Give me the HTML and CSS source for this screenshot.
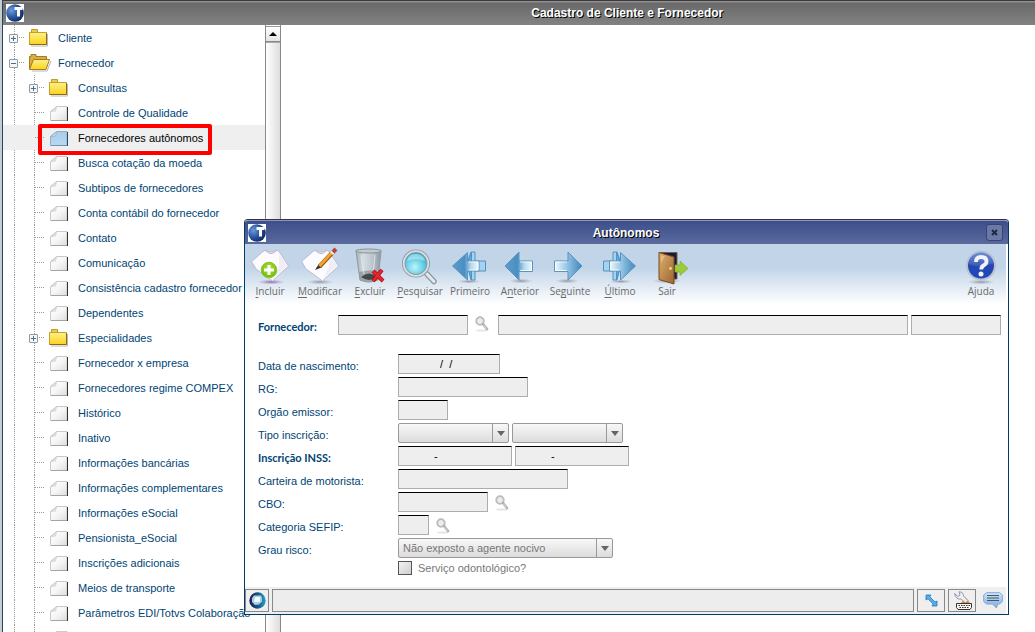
FILE: index.html
```html
<!DOCTYPE html>
<html lang="pt-BR">
<head>
<meta charset="utf-8">
<title>Cadastro de Cliente e Fornecedor</title>
<link rel="stylesheet" href="styles.css">
</head>
<body>
<svg class="defs" aria-hidden="true">
  <defs>
    <linearGradient id="gYellow" x1="0" y1="0" x2="0" y2="1"><stop offset="0" stop-color="#fff18c"/><stop offset="1" stop-color="#fbd21c"/></linearGradient>
    <linearGradient id="gPaper" x1="0" y1="0" x2="1" y2="1"><stop offset="0" stop-color="#fff"/><stop offset=".5" stop-color="#f6f6f6"/><stop offset="1" stop-color="#dcdcdc"/></linearGradient>
    <linearGradient id="gPaperBlue" x1="0" y1="0" x2="0" y2="1"><stop offset="0" stop-color="#a9cdea"/><stop offset="1" stop-color="#b9d8f0"/></linearGradient>
    <radialGradient id="gGlobe" cx=".3" cy=".35" r=".75"><stop offset="0" stop-color="#6f9ad8"/><stop offset=".5" stop-color="#2c59a5"/><stop offset="1" stop-color="#10285e"/></radialGradient>
    <linearGradient id="gArrowL" x1="0" y1="0" x2="1" y2="0"><stop offset="0" stop-color="#5b9ccb"/><stop offset=".45" stop-color="#4a8fc2"/><stop offset=".7" stop-color="#b5d8ee"/><stop offset="1" stop-color="#f2f9fe"/></linearGradient>
    <linearGradient id="gArrowR" x1="1" y1="0" x2="0" y2="0"><stop offset="0" stop-color="#3f86bd"/><stop offset=".5" stop-color="#8dbfe1"/><stop offset="1" stop-color="#f2f9fe"/></linearGradient>
    <radialGradient id="gShadow"><stop offset="0" stop-color="#667" stop-opacity=".65"/><stop offset="1" stop-color="#99a" stop-opacity="0"/></radialGradient>
    <radialGradient id="gShadowPink"><stop offset="0" stop-color="#7a5690" stop-opacity=".85"/><stop offset="1" stop-color="#a98bb8" stop-opacity="0"/></radialGradient>
    <radialGradient id="gGreen" cx=".5" cy=".4"><stop offset="0" stop-color="#b6e83f"/><stop offset="1" stop-color="#78bd16"/></radialGradient>
    <linearGradient id="gBin" x1="0" y1="0" x2="1" y2="0"><stop offset="0" stop-color="#a3adb4"/><stop offset=".3" stop-color="#d5dde3"/><stop offset=".65" stop-color="#bcc6ce"/><stop offset="1" stop-color="#8c969d"/></linearGradient>
    <radialGradient id="gLens" cx=".45" cy=".65" r=".6"><stop offset="0" stop-color="#bdf4fb"/><stop offset=".6" stop-color="#63cfe6"/><stop offset="1" stop-color="#35a5cc"/></radialGradient>
    <linearGradient id="gDoor" x1="0" y1="0" x2="1" y2="1"><stop offset="0" stop-color="#dfb070"/><stop offset="1" stop-color="#9c6431"/></linearGradient>
    <linearGradient id="gHelp" x1="0" y1="0" x2="0" y2="1"><stop offset="0" stop-color="#5a86d8"/><stop offset=".5" stop-color="#2447b0"/><stop offset="1" stop-color="#1e49c0"/></linearGradient>
    <linearGradient id="gOrb" x1="0" y1="0" x2="1" y2="0"><stop offset="0" stop-color="#1c1f52"/><stop offset=".55" stop-color="#195a86"/><stop offset="1" stop-color="#25a4c6"/></linearGradient>
    <linearGradient id="gChat" x1="0" y1="0" x2="0" y2="1"><stop offset="0" stop-color="#d4e6f7"/><stop offset="1" stop-color="#79a9de"/></linearGradient>
  </defs>
  <symbol id="logo" viewBox="0 0 18 18">
    <rect width="18" height="18" fill="#fff"/>
    <circle cx="9" cy="9" r="8.800" fill="url(#gGlobe)"/>
    <path d="M8.500 4.500H16.500M12.500 4.500V12.500" stroke="#fff" stroke-width="3" fill="none"/>
  </symbol>
  <symbol id="folder" viewBox="0 0 20 18">
    <path d="M2 17H18.500V5" stroke="#b9b9b9" fill="none"/>
    <path d="M2.500 4V.5H8.500V4" fill="#eccb4c" stroke="#c09a2c"/>
    <path d="M.5 3.500H17.500V15.500H.5Z" fill="url(#gYellow)" stroke="#c8a020"/>
    <path d="M.5 15.500H17.500V4" fill="none" stroke="#8d6a10"/>
  </symbol>
  <symbol id="folder-open" viewBox="0 0 23 18">
    <path d="M3 17H18L22 7" stroke="#b5b5b5" fill="none"/>
    <path d="M.5 15V2.500H2V.5H7V2.500H17.500V7" fill="#d8ad46" stroke="#a57c20"/>
    <path d="M4.500 5.500H20.500L17 15.500H.5Z" fill="url(#gYellow)" stroke="#a57c20"/>
  </symbol>
  <symbol id="doc" viewBox="0 0 20 16">
    <path d="M6.500 .5H17V14.500H.5V5.500Z" fill="url(#gPaper)" stroke="#c9c9c9"/>
    <path d="M6.500 1L5.500 5L1 5.500Z" fill="#e6e6e6" stroke="#c4c4c4" stroke-width=".6"/>
    <path d="M17.500 1V15" stroke="#333"/><path d="M1 14.500H17" stroke="#a4a4a4"/>
  </symbol>
  <symbol id="doc-on" viewBox="0 0 20 16">
    <path d="M6.500 .5H17V14.500H.5V5.500Z" fill="url(#gPaperBlue)" stroke="#8eb0cc"/>
    <path d="M6.500 1L5.500 5L1 5.500Z" fill="#d3e6f5" stroke="#7fa6c6" stroke-width=".6"/>
    <path d="M17.500 1V15" stroke="#2c4a66"/><path d="M1 14.500H17" stroke="#6f93b2"/>
  </symbol>
  <symbol id="shirt" viewBox="0 0 38 36">
    <path d="M12 2.500L15 1Q20 5 25 1L28 2.500L37.500 17L31 23L21.500 32L12 25L5 20L.7 12.500Z" fill="#fcfbff" stroke="#b6b0c6" stroke-width=".8"/>
    <path d="M14.500 1.500Q20 7.500 25.500 1.500" fill="none" stroke="#b3acc0"/>
    <path d="M28 5L36 16.500L23 29L28 17Z" fill="#f0edf5"/>
  </symbol>
  <symbol id="arrow-l" viewBox="0 0 36 36">
    <ellipse cx="19" cy="32" rx="12" ry="2.500" fill="url(#gShadow)"/>
    <path d="M3 17L17 3V12H30.500V22.500H17V31Z" fill="url(#gArrowL)" stroke="#5b93bd"/>
    <path d="M18 13H29.500V21.500H18" fill="none" stroke="#fff" opacity=".8"/>
  </symbol>
  <symbol id="arrow-r" viewBox="0 0 36 36">
    <ellipse cx="15" cy="32" rx="12" ry="2.500" fill="url(#gShadow)"/>
    <path d="M30 17L16 3V12H2.500V22.500H16V31Z" fill="url(#gArrowR)" stroke="#5b93bd"/>
    <path d="M15 13H3.500V21.500H15" fill="none" stroke="#fff" opacity=".8"/>
  </symbol>
  <symbol id="lookup" viewBox="0 0 14 16">
    <ellipse cx="7" cy="14.500" rx="6" ry="1" fill="#e4e4e4"/>
    <circle cx="5" cy="5" r="3.800" fill="#ececec" stroke="#bcbcbc" stroke-width="1.800"/>
    <path d="M8 8L12 13" stroke="#b2b2b2" stroke-width="2.600" stroke-linecap="round"/>
    <path d="M8.500 9L11.500 12.500" stroke="#ddd"/>
  </symbol>
</svg>

<main class="app">
  <header class="app-bar">
    <svg class="logo"><use href="#logo"/></svg>
    <h1 class="app-title">Cadastro de Cliente e Fornecedor</h1>
  </header>
  <div class="app-body">
    <nav class="tree" aria-label="Menu">
      <ul class="tree-list">
        <li class="row"><button class="cell toggle" aria-label="Expandir"></button><svg class="ico folder"><use href="#folder"/></svg><a href="#">Cliente</a></li>
        <li class="row"><button class="cell toggle open" aria-label="Recolher"></button><svg class="ico folder-open"><use href="#folder-open"/></svg><a href="#">Fornecedor</a></li>
        <li class="row"><span class="cell"></span><button class="cell toggle" aria-label="Expandir"></button><svg class="ico folder"><use href="#folder"/></svg><a href="#">Consultas</a></li>
        <li class="row"><span class="cell"></span><span class="cell branch"></span><svg class="ico doc"><use href="#doc"/></svg><a href="#">Controle de Qualidade</a></li>
        <li class="row selected"><span class="cell"></span><span class="cell branch"></span><svg class="ico doc"><use href="#doc-on"/></svg><a href="#">Fornecedores autônomos</a></li>
        <li class="row"><span class="cell"></span><span class="cell branch"></span><svg class="ico doc"><use href="#doc"/></svg><a href="#">Busca cotação da moeda</a></li>
        <li class="row"><span class="cell"></span><span class="cell branch"></span><svg class="ico doc"><use href="#doc"/></svg><a href="#">Subtipos de fornecedores</a></li>
        <li class="row"><span class="cell"></span><span class="cell branch"></span><svg class="ico doc"><use href="#doc"/></svg><a href="#">Conta contábil do fornecedor</a></li>
        <li class="row"><span class="cell"></span><span class="cell branch"></span><svg class="ico doc"><use href="#doc"/></svg><a href="#">Contato</a></li>
        <li class="row"><span class="cell"></span><span class="cell branch"></span><svg class="ico doc"><use href="#doc"/></svg><a href="#">Comunicação</a></li>
        <li class="row"><span class="cell"></span><span class="cell branch"></span><svg class="ico doc"><use href="#doc"/></svg><a href="#">Consistência cadastro fornecedor</a></li>
        <li class="row"><span class="cell"></span><span class="cell branch"></span><svg class="ico doc"><use href="#doc"/></svg><a href="#">Dependentes</a></li>
        <li class="row"><span class="cell"></span><button class="cell toggle" aria-label="Expandir"></button><svg class="ico folder"><use href="#folder"/></svg><a href="#">Especialidades</a></li>
        <li class="row"><span class="cell"></span><span class="cell branch"></span><svg class="ico doc"><use href="#doc"/></svg><a href="#">Fornecedor x empresa</a></li>
        <li class="row"><span class="cell"></span><span class="cell branch"></span><svg class="ico doc"><use href="#doc"/></svg><a href="#">Fornecedores regime COMPEX</a></li>
        <li class="row"><span class="cell"></span><span class="cell branch"></span><svg class="ico doc"><use href="#doc"/></svg><a href="#">Histórico</a></li>
        <li class="row"><span class="cell"></span><span class="cell branch"></span><svg class="ico doc"><use href="#doc"/></svg><a href="#">Inativo</a></li>
        <li class="row"><span class="cell"></span><span class="cell branch"></span><svg class="ico doc"><use href="#doc"/></svg><a href="#">Informações bancárias</a></li>
        <li class="row"><span class="cell"></span><span class="cell branch"></span><svg class="ico doc"><use href="#doc"/></svg><a href="#">Informações complementares</a></li>
        <li class="row"><span class="cell"></span><span class="cell branch"></span><svg class="ico doc"><use href="#doc"/></svg><a href="#">Informações eSocial</a></li>
        <li class="row"><span class="cell"></span><span class="cell branch"></span><svg class="ico doc"><use href="#doc"/></svg><a href="#">Pensionista_eSocial</a></li>
        <li class="row"><span class="cell"></span><span class="cell branch"></span><svg class="ico doc"><use href="#doc"/></svg><a href="#">Inscrições adicionais</a></li>
        <li class="row"><span class="cell"></span><span class="cell branch"></span><svg class="ico doc"><use href="#doc"/></svg><a href="#">Meios de transporte</a></li>
        <li class="row"><span class="cell"></span><span class="cell branch"></span><svg class="ico doc"><use href="#doc"/></svg><a href="#">Parâmetros EDI/Totvs Colaboração</a></li>
        <li class="row"><span class="cell"></span><span class="cell branch"></span><svg class="ico doc"><use href="#doc"/></svg></li>
      </ul>
    </nav>
    <div class="scroll"><button class="scroll-up" aria-label="Rolar para cima"><svg width="8" height="4" viewBox="0 0 8 4"><path d="M0 4L4 0L8 4Z"/></svg></button><div class="scroll-thumb"></div></div>
  </div>
</main>

<section class="window" role="dialog" aria-labelledby="win-title">
  <header class="win-bar">
    <svg class="logo"><use href="#logo"/></svg>
    <h2 class="win-title" id="win-title">Autônomos</h2>
    <button class="close" aria-label="Fechar"><svg width="7" height="7" viewBox="0 0 7 7"><path d="M1 1L6 6M6 1L1 6" stroke="#1d2747" stroke-width="2"/></svg></button>
  </header>
  <div class="toolbar">
    <button class="tool"><svg viewBox="0 0 38 36"><ellipse cx="20" cy="33" rx="14" ry="2.500" fill="url(#gShadowPink)"/><use href="#shirt"/><circle cx="18" cy="21" r="7.800" fill="url(#gGreen)" stroke="#8bc926"/><path d="M18 16V26M13 21H23" stroke="#fff" stroke-width="3"/></svg><span><u>I</u>ncluir</span></button>
    <button class="tool"><svg viewBox="0 0 38 36"><ellipse cx="19" cy="33" rx="14" ry="2.500" fill="url(#gShadow)"/><use href="#shirt"/><path d="M14 21L17.500 15.500L20.500 18.500Z" fill="#333"/><path d="M18.500 17.500L32 3" stroke="#9a5310" stroke-width="4.400"/><path d="M18.500 17L31 3.500" stroke="#f3a52c" stroke-width="2.800"/><path d="M30.500 4.500L32 3" stroke="#eee" stroke-width="4"/><path d="M32 3L35 0" stroke="#b5443b" stroke-width="4"/></svg><span><u>M</u>odificar</span></button>
    <button class="tool"><svg viewBox="0 0 38 36"><path d="M5 2L9 31Q18 35 27 31L30 2Z" fill="url(#gBin)" stroke="#909aa1"/><path d="M8 23L9 31Q18 35 27 31L28 23Q18 20 8 23Z" fill="#8d9499" opacity=".75"/><path d="M10 28Q18 21 26 28Q18 34 10 28Z" fill="#44484b"/><path d="M10 6L13 25M24 6L22 25" stroke="#e7edf1" opacity=".8"/><ellipse cx="17.500" cy="2" rx="13" ry="2" fill="#c0cad1" stroke="#8a9399"/><path d="M22 22L32 32M31 21L22 32" stroke="#a80c12" stroke-width="4"/><path d="M22 22L32 32M31 21L22 32" stroke="#e9252b" stroke-width="2.500"/></svg><span><u>E</u>xcluir</span></button>
    <button class="tool"><svg viewBox="0 0 38 36"><path d="M26 25L33 32.500" stroke="#8b98a2" stroke-width="5.500" stroke-linecap="round"/><path d="M26 25L33 32.500" stroke="#e3eaee" stroke-width="3" stroke-linecap="round"/><circle cx="15" cy="14.500" r="12.300" fill="url(#gLens)" stroke="#8c9aa2" stroke-width="3.500"/><circle cx="15" cy="14.500" r="12.300" fill="none" stroke="#d6dfe4" stroke-width="1.800"/><path d="M6 12Q8 4 16 5Q23 6 24 12Q15 8 6 12Z" fill="#fff" opacity=".4"/></svg><span><u>P</u>esquisar</span></button>
    <button class="tool"><svg viewBox="0 0 36 36"><path d="M15 14L19 3H23V12H33.500V22H23V31H19Z" fill="#a6d1ef" stroke="#4e94c7"/><path d="M15 15L19.500 3V31Z" fill="#62aedd" stroke="#4e94c7"/><ellipse cx="17" cy="32.500" rx="12" ry="2" fill="url(#gShadow)"/><path d="M.5 17L15.500 3.500V12H27V22H15.500V31Z" fill="url(#gArrowL)" stroke="#5b93bd"/><path d="M16.500 13H26V21H16.500" fill="none" stroke="#fff" opacity=".8"/></svg><span>Primeiro</span></button>
    <button class="tool"><svg viewBox="0 0 36 36"><use href="#arrow-l"/></svg><span>A<u>n</u>terior</span></button>
    <button class="tool"><svg viewBox="0 0 36 36"><use href="#arrow-r"/></svg><span>Se<u>g</u>uinte</span></button>
    <button class="tool"><svg viewBox="0 0 36 36"><path d="M19 14L15 3H11V12H1.500V22H11V31H15Z" fill="#a6d1ef" stroke="#4e94c7"/><path d="M19 15L14.500 3V31Z" fill="#62aedd" stroke="#4e94c7"/><ellipse cx="19" cy="32.500" rx="12" ry="2" fill="url(#gShadow)"/><path d="M33.500 17L18.500 3.500V12H7.500V22H18.500V31Z" fill="url(#gArrowR)" stroke="#5b93bd"/><path d="M17.500 13H8.500V21H17.500" fill="none" stroke="#fff" opacity=".8"/></svg><span><u>Ú</u>ltimo</span></button>
    <button class="tool exit"><svg viewBox="0 0 38 36"><ellipse cx="19" cy="32" rx="15" ry="2.500" fill="url(#gShadow)"/><path d="M11 3.500H29V30H24Z" fill="#161a45" stroke="#7e5b36"/><path d="M11 3.500L26 8V35L11 30.500Z" fill="url(#gDoor)" stroke="#7a4b20"/><path d="M13 6L17 7.500L13 14Z" fill="#f0cc94" opacity=".6"/><circle cx="22.500" cy="19.500" r="1.400" fill="#f8da76"/><path d="M27 16H32V12L40 19.500L32 26.500V23H27Z" fill="#9ccc3c" stroke="#7fb02c" stroke-width=".7"/></svg><span>Sair</span></button>
    <button class="tool help"><svg viewBox="0 0 36 36"><ellipse cx="18" cy="33" rx="14" ry="2.500" fill="url(#gShadow)"/><circle cx="18" cy="16.500" r="14" fill="url(#gHelp)" stroke="#bac1d0" stroke-width="2"/><path d="M5.500 15Q8 4 18 4Q28 4 30.500 14Q18 20 5.500 15Z" fill="#fff" opacity=".12"/><path d="M13 13Q13 8 18 8Q23.500 8 23.500 12.500Q23.500 15 20.500 16.500Q18.300 17.800 18.300 20.500" fill="none" stroke="#f4f4f8" stroke-width="3.800"/><circle cx="18" cy="25" r="2.500" fill="#f4f4f8"/></svg><span>Ajuda</span></button>
  </div>

  <form class="form">
    <div class="supplier">
      <label class="label strong" for="fornecedor">Fornecedor:</label>
      <input class="field w130" id="fornecedor" type="text">
      <button type="button" class="lookup" aria-label="Pesquisar fornecedor"><svg><use href="#lookup"/></svg></button>
      <input class="field grow" type="text" aria-label="Nome do fornecedor">
      <input class="field w90" type="text" aria-label="Código do fornecedor">
    </div>
    <div class="fields">
      <label class="label" for="nasc">Data de nascimento:</label>
      <div class="line"><input class="field w102 date" id="nasc" type="text" value="/  /"></div>
      <label class="label" for="rg">RG:</label>
      <div class="line"><input class="field w130" id="rg" type="text"></div>
      <label class="label" for="orgao">Orgão emissor:</label>
      <div class="line"><input class="field w50" id="orgao" type="text"></div>
      <label class="label" for="tipo">Tipo inscrição:</label>
      <div class="line"><span class="combo w111"><select id="tipo"><option></option></select></span><span class="combo w111"><select aria-label="Subtipo inscrição"><option></option></select></span></div>
      <label class="label strong" for="inss">Inscrição INSS:</label>
      <div class="line"><input class="field w114 mask" id="inss" type="text" value="-"><input class="field w114 mask" type="text" value="-" aria-label="Inscrição INSS complemento"></div>
      <label class="label" for="cnh">Carteira de motorista:</label>
      <div class="line"><input class="field w170" id="cnh" type="text"></div>
      <label class="label" for="cbo">CBO:</label>
      <div class="line"><input class="field w90" id="cbo" type="text"><button type="button" class="lookup" aria-label="Pesquisar CBO"><svg><use href="#lookup"/></svg></button></div>
      <label class="label" for="sefip">Categoria SEFIP:</label>
      <div class="line"><input class="field w31" id="sefip" type="text"><button type="button" class="lookup" aria-label="Pesquisar categoria SEFIP"><svg><use href="#lookup"/></svg></button></div>
      <label class="label" for="risco">Grau risco:</label>
      <div class="line"><span class="combo w215"><select id="risco"><option>Não exposto a agente nocivo</option></select></span></div>
      <div class="line check"><input type="checkbox" id="odonto"><label for="odonto">Serviço odontológico?</label></div>
    </div>
  </form>

  <footer class="status">
    <button class="status-btn orb" aria-label="Sobre"><svg width="17" height="17" viewBox="0 0 17 17"><circle cx="8.500" cy="8.500" r="8.200" fill="url(#gOrb)"/><path d="M3 6L5 3.500H12L13 6V9.500L10 12.500L6 13L3 10Z" fill="#a9cfe2"/><path d="M6 5H11V10H5Z" fill="#f4f9fc"/></svg></button>
    <output class="status-text"></output>
    <button class="status-btn" aria-label="Redimensionar"><svg width="13" height="13" viewBox="0 0 13 13"><path d="M1 1H6L4.800 2.800L10 8L12 7V12H7L8.200 10L3 4.800L1 6Z" fill="#54aef0" stroke="#2277b8" stroke-width=".8"/></svg></button>
    <button class="status-btn" aria-label="Ferramentas"><svg width="19" height="19" viewBox="0 0 19 19"><path d="M8 12L12.500 6.500L17 12Z" fill="#f08c1c"/><path d="M1.500 2.500L5 5.500L7 4L6 .8Q10.500 1 10.500 5L15 9.500L12.500 12L8 8Q3 9 1.500 2.500Z" fill="#eceef2" stroke="#7f8597" stroke-width=".8"/><path d="M3.500 12.500H18.500V16.500L17 18.500H5L3.500 16.500Z" fill="#f6f6f6" stroke="#333"/><path d="M5.500 14.500H17M6.500 16.500H16" stroke="#333" stroke-dasharray="1.500 1"/></svg></button>
    <button class="chat" aria-label="Mensagens"><svg width="20" height="17" viewBox="0 0 20 17"><path d="M3.500 .7H16.500L19.300 3V9.500L16.500 12H14.500L13.500 16L9.500 12H3.500L.7 9.500V3Z" fill="url(#gChat)" stroke="#7da7d6"/><path d="M4 3.500H16M4 6H16M4 8.500H16" stroke="#48566b"/></svg></button>
  </footer>
</section>
</body>
</html>
```
FILE: styles.css
```css
*, *::before, *::after { box-sizing: border-box; }

body {
  margin: 0;
  height: 100vh;
  overflow: hidden;
  background: #fff;
  color: #004474;
  font: 11px/14px "Liberation Sans", Arial, sans-serif;
}

button, input, select { font: inherit; color: inherit; margin: 0; }
button { padding: 0; border: 0; background: none; }
h1, h2 { margin: 0; font-size: 12px; line-height: 16px; }
.defs { position: absolute; width: 0; height: 0; }

/* Main window */
.app {
  display: flex;
  flex-direction: column;
  height: 100%;
  margin-left: 2px;
  border-left: 1px solid #1d466c;
  box-shadow: -2px 0 #c9cbcd;
}
.app-bar {
  display: flex;
  align-items: center;
  height: 25px;
  padding-left: 3px;
  border-top: 1px solid #3d393d;
  background: linear-gradient(#8f8f8f 1px, #696969 2px, #828282);
}
.logo { width: 18px; height: 18px; flex: none; }
.app-title {
  flex: 1;
  padding-left: 19%;
  text-align: center;
  color: #fff;
  text-shadow: 1px 1px #000;
}
.app-body { display: flex; flex: 1; min-height: 0; }

.tree { width: 262px; overflow: hidden; }
.tree-list { list-style: none; margin: 0; padding: 0; }
.row { position: relative; display: flex; align-items: center; height: 25px; padding-left: 1px; white-space: nowrap; }
.row a { color: inherit; text-decoration: none; }
.cell {
  position: relative;
  flex: none;
  width: 20px;
  height: 25px;
  background: repeating-linear-gradient(#9a9a9a 0 1px, transparent 1px 2px) 10px 0 / 1px 100% no-repeat;
}
.branch::after, .toggle::after {
  content: "";
  position: absolute;
  left: 11px;
  top: 12px;
  width: 9px;
  height: 1px;
  background: repeating-linear-gradient(90deg, #9a9a9a 0 1px, transparent 1px 2px);
}
.toggle::before {
  content: "";
  position: absolute;
  z-index: 1;
  left: 5px;
  top: 9px;
  width: 9px;
  height: 9px;
  border: 1px solid #8f9aa3;
  border-radius: 1px;
  background:
    linear-gradient(#4a7090, #4a7090) center / 5px 1px no-repeat,
    linear-gradient(#4a7090, #4a7090) center / 1px 5px no-repeat,
    #f5f7f8;
}
.open::before {
  background: linear-gradient(#4a7090, #4a7090) center / 5px 1px no-repeat, #f5f7f8;
}
.ico { flex: none; height: 18px; margin-left: 5px; }
.folder { width: 20px; margin-right: 9px; }
.folder-open { width: 23px; margin-right: 6px; }
.doc { width: 20px; height: 16px; margin: 2px 8px 0 6px; }
.selected { color: #000; background: #efefef; }
.selected .cell { background: none; }
.selected::after {
  content: "";
  position: absolute;
  left: 35px;
  top: -1px;
  width: 174px;
  height: 31px;
  border: 4px solid #fe0000;
  border-radius: 2px;
  z-index: 2;
}

.scroll {
  display: flex;
  flex-direction: column;
  width: 16px;
  padding-top: 1px;
  border: solid #888;
  border-width: 0 1px;
  background: #fff;
}
.scroll-up {
  display: grid;
  place-items: center;
  height: 16px;
  border-top: 1px solid #999;
  border-bottom: 1px solid #888;
  background: linear-gradient(#fff, #e4e4e4);
}
.scroll-thumb { flex: 1; border-top: 1px solid #aaa; background: linear-gradient(90deg, #fff, #dedede); }

/* Floating window */
.window {
  position: absolute;
  left: 244px;
  right: 26px;
  top: 219px;
  z-index: 3;
  display: flex;
  flex-direction: column;
  border: 1px solid #003c68;
  border-top-color: #303440;
  border-radius: 4px 4px 0 0;
  background: #fff;
}
.win-bar {
  display: flex;
  align-items: center;
  height: 24px;
  padding: 0 5px 0 3px;
  border-top: 1px solid #8b98bb;
  border-radius: 3px 3px 0 0;
  background: linear-gradient(#3d4f8b, #5a6a9e);
}
.win-title { flex: 1; text-align: center; color: #fff; text-shadow: 1px 1px #000; }
.close {
  display: grid;
  place-items: center;
  width: 17px;
  height: 17px;
  border: 1px solid #37446f;
  border-radius: 3px;
  background: #6b79a7;
}
.toolbar {
  display: flex;
  margin-right: 2px;
  padding: 5px 0 1px;
  height: 60px;
  background: linear-gradient(#c2d5e8 0 40%, #fff);
}
.tool {
  display: flex;
  flex-direction: column;
  align-items: center;
  width: 50px;
  color: #6a6a6a;
  font: 10px/12px "Open Sans", sans-serif;
}
.tool svg { width: 38px; height: 36px; overflow: visible; }
.tool u { text-underline-offset: 2px; }
.exit { width: 44px; }
.help { margin-left: auto; }

.form { padding: 11px 7px 12px 13px; }
.label { padding-top: 5px; }
.strong { font: bold 11px/14px Lato, sans-serif; }
.supplier { display: flex; gap: 3px; margin-bottom: 19px; }
.supplier .label { width: 77px; }
.supplier .lookup { margin-right: 5px; }
.fields { display: grid; grid-template-columns: 140px 1fr; row-gap: 3px; }
.line { display: flex; gap: 3px; align-items: center; }
.field {
  height: 20px;
  padding: 0 3px;
  border: 1px solid #adadad;
  border-top-color: #000;
  border-radius: 0;
  background: #eee;
  color: #000;
  outline: 0;
}
.grow { flex: 1; min-width: 0; }
.w31 { width: 31px; }
.w50 { width: 50px; }
.w90 { width: 90px; }
.w102 { width: 102px; }
.w111 { width: 111px; }
.w114 { width: 114px; }
.w130 { width: 130px; }
.w170 { width: 170px; }
.w215 { width: 215px; }
.date { padding-left: 41px; }
.mask { padding-left: 35px; }
.lookup { width: 14px; height: 16px; margin: 1px 1px 0 4px; }
.lookup svg { display: block; width: 14px; height: 16px; }
.supplier .lookup { margin-right: 6px; }

.combo { position: relative; display: block; height: 20px; }
.combo select {
  appearance: none;
  width: 100%;
  height: 20px;
  padding: 0 20px 0 4px;
  border: 1px solid #999;
  border-radius: 2px;
  background: linear-gradient(#f8f8f8, #dcdcdc);
  color: #777;
}
.combo::before, .combo::after { content: ""; position: absolute; pointer-events: none; }
.combo::before { right: 16px; top: 1px; width: 1px; height: 18px; background: #999; }
.combo::after { right: 4px; top: 8px; border: 4px solid transparent; border-top: 5px solid #666; border-bottom: 0; }

.check { grid-column: 2; gap: 6px; color: #777; }
.check input {
  appearance: none;
  width: 14px;
  height: 14px;
  border: 1px solid #555;
  background: linear-gradient(135deg, #f2f2f2, #cfcfcf);
}

.status {
  display: flex;
  gap: 3px;
  margin-right: 2px;
  padding: 2px 3px 1px 0;
  background: #efefef;
  border-bottom: 1px solid #efefef;
}
.status-btn {
  display: grid;
  place-items: center;
  width: 28px;
  height: 23px;
  border: 1px solid #888;
}
.orb { width: 24px; }
.status-text { flex: 1; border: 1px solid #888; background: #ededed; }
.chat { display: grid; place-items: center; width: 20px; margin-left: 4px; }
```
